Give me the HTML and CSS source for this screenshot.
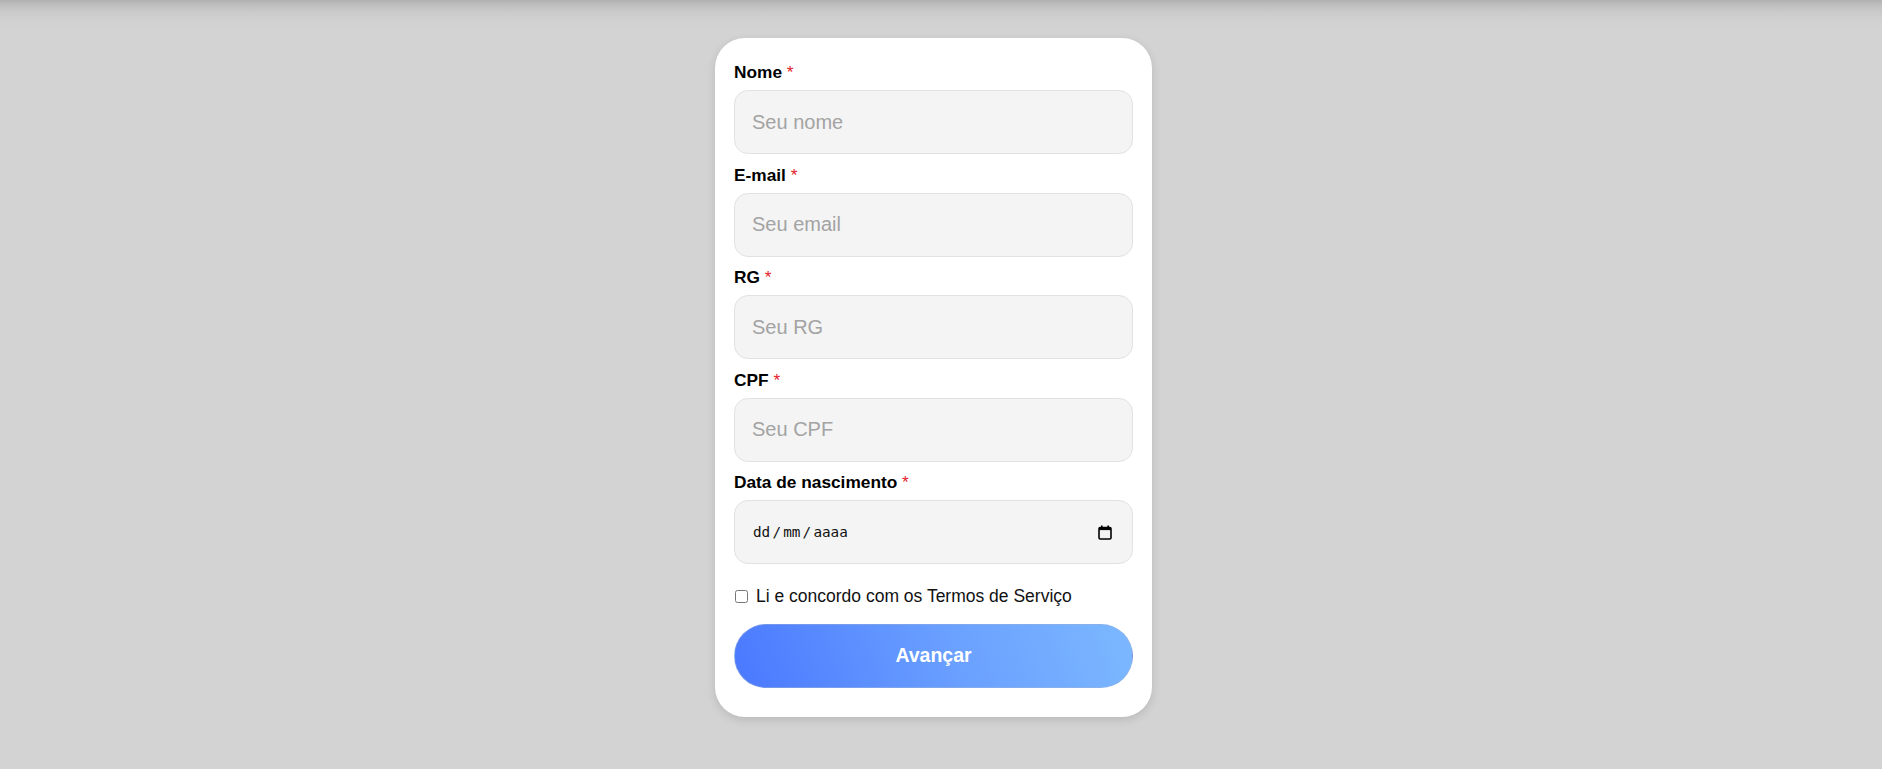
FILE: index.html
```html
<!DOCTYPE html>
<html lang="pt-BR">
<head>
<meta charset="utf-8">
<title>Cadastro</title>
<link rel="stylesheet" href="styles.css">
</head>
<body>
<main class="page">
  <form class="card">
    <div class="field">
      <label class="label" for="nome">Nome <span class="req">*</span></label>
      <input class="input" id="nome" type="text" placeholder="Seu nome">
    </div>
    <div class="field">
      <label class="label" for="email">E-mail <span class="req">*</span></label>
      <input class="input" id="email" type="email" placeholder="Seu email">
    </div>
    <div class="field">
      <label class="label" for="rg">RG <span class="req">*</span></label>
      <input class="input" id="rg" type="text" placeholder="Seu RG">
    </div>
    <div class="field">
      <label class="label" for="cpf">CPF <span class="req">*</span></label>
      <input class="input" id="cpf" type="text" placeholder="Seu CPF">
    </div>
    <div class="field">
      <label class="label" for="nasc">Data de nascimento <span class="req">*</span></label>
      <div class="input date-field" id="nasc" role="textbox" tabindex="0">
        <span class="date-text"><span>dd</span><span class="sep">/</span><span>mm</span><span class="sep">/</span><span>aaaa</span></span>
        <svg class="cal" width="14" height="15" viewBox="0 0 14 15" aria-hidden="true">
          <rect x="1" y="2.5" width="12" height="11.5" rx="1.2" fill="none" stroke="#000" stroke-width="1.6"/>
          <rect x="1" y="2.5" width="12" height="2.6" fill="#000"/>
          <rect x="3" y="0.5" width="1.6" height="3" fill="#000"/>
          <rect x="9.4" y="0.5" width="1.6" height="3" fill="#000"/>
        </svg>
      </div>
    </div>
    <label class="terms">
      <input class="check" type="checkbox">
      <span>Li e concordo com os Termos de Serviço</span>
    </label>
    <button class="btn" type="button">Avançar</button>
  </form>
</main>
</body>
</html>
```
FILE: styles.css
```css
html, body {
  margin: 0;
  padding: 0;
  height: 100%;
}
body {
  background-color: #d3d3d3;
  background-image: linear-gradient(to bottom, #b1b1b1 0, #bfbfbf 5px, #cacaca 12px, #d0d0d0 19px, #d3d3d3 28px);
  background-repeat: no-repeat;
  background-size: 100% 40px;
  font-family: "Liberation Sans", Arial, sans-serif;
  color: #000;
}
.page {
  display: flex;
  justify-content: center;
  padding: 38px 15px 0 0;
}
.card {
  width: 437px;
  box-sizing: border-box;
  background: #fff;
  border-radius: 30px;
  padding: 24px 19px 29px 19px;
  box-shadow: 0 3px 10px rgba(0, 0, 0, 0.12);
  display: flex;
  flex-direction: column;
}
.field {
  display: flex;
  flex-direction: column;
  margin-bottom: 10.5px;
}
.label {
  font-size: 17.3px;
  line-height: 20px;
  font-weight: bold;
  margin-bottom: 8px;
}
.req {
  color: #e3212b;
  font-weight: normal;
}
.input {
  box-sizing: border-box;
  height: 64px;
  width: 100%;
  margin: 0;
  padding: 0 17px;
  border: 1px solid #e2e2e2;
  border-radius: 14px;
  background: #f4f4f4;
  font-family: "Liberation Sans", Arial, sans-serif;
  font-size: 20px;
  color: #000;
  outline: none;
}
.input::placeholder {
  color: #a3a3a3;
}
.date-field {
  display: flex;
  align-items: center;
  justify-content: space-between;
  padding: 0 20px 0 18px;
}
.date-text {
  display: flex;
  font-family: "DejaVu Sans Mono", monospace;
  font-size: 14.3px;
  color: #111;
}
.sep {
  margin: 0 2.2px;
}
.cal {
  display: block;
}
.terms {
  display: flex;
  align-items: center;
  gap: 8px;
  margin-top: 12px;
  height: 20px;
  font-size: 17.5px;
  color: #111;
}
.check {
  width: 13px;
  height: 13px;
  margin: 0 0 0 1px;
}
.btn {
  margin-top: 17px;
  height: 64px;
  width: 100%;
  box-sizing: border-box;
  border: 1px solid rgba(160, 180, 210, 0.45);
  border-radius: 32px;
  background: linear-gradient(70deg, #4a78ff 0%, #6aa0ff 55%, #7cb8ff 100%);
  color: #fff;
  font-family: "Liberation Sans", Arial, sans-serif;
  font-size: 19.5px;
  font-weight: bold;
  cursor: pointer;
}
```
